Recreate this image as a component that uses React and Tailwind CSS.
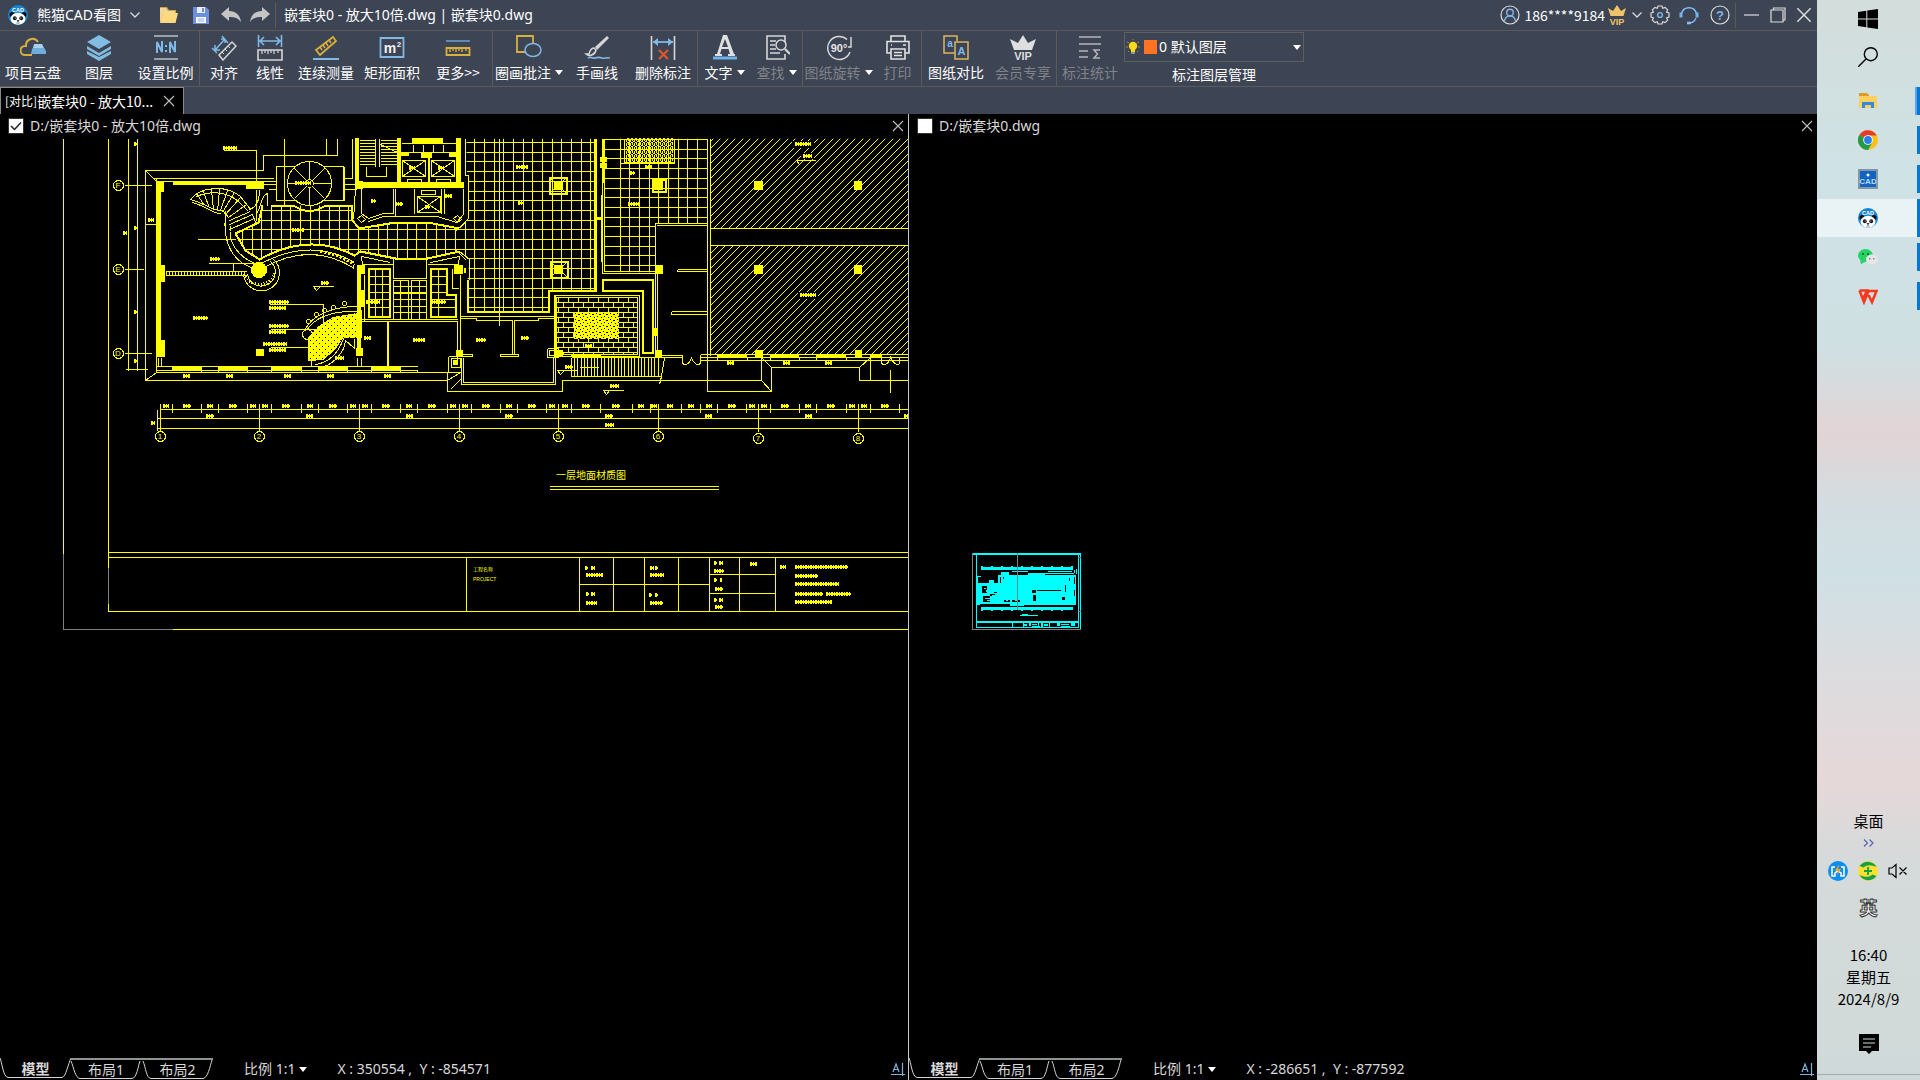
// src/App.jsx
import { useState } from "react";

const Y = "#ffff00";
const C = "#00ffff";

/* ---------- small shared pieces ---------- */

function Caret({ className = "" }) {
  return (
    <svg viewBox="0 0 8 5" className={`h-[5px] w-2 shrink-0 ${className}`}>
      <path d="M0 0h8L4 5z" fill="#fff" />
    </svg>
  );
}

function Chevron() {
  return (
    <svg viewBox="0 0 12 8" className="h-2 w-3" fill="none" stroke="#d8d8d8" strokeWidth="1.3">
      <path d="M1.500 1.500L6 6l4.500-4.500" />
    </svg>
  );
}

function Cross({ className = "h-3 w-3", color = "#c0c0c0" }) {
  return (
    <svg viewBox="0 0 12 12" className={className} fill="none" stroke={color} strokeWidth="1.100">
      <path d="M1 1l10 10M11 1L1 11" />
    </svg>
  );
}

function PandaLogo() {
  return (
    <svg viewBox="0 0 20 20" className="h-5 w-5">
      <circle cx="10" cy="10" r="10" fill="#1785cf" />
      <text x="10" y="6.800" textAnchor="middle" fontSize="5.500" fontWeight="700" fill="#fff" fontFamily="Liberation Sans, sans-serif">
        CAD
      </text>
      <circle cx="4" cy="9.500" r="2.500" fill="#111" />
      <circle cx="16" cy="9.500" r="2.500" fill="#111" />
      <ellipse cx="10" cy="13.800" rx="7.500" ry="6" fill="#fff" />
      <ellipse cx="6.800" cy="13.300" rx="1.900" ry="2" fill="#111" />
      <ellipse cx="13.200" cy="13.300" rx="1.900" ry="2" fill="#111" />
      <circle cx="7.200" cy="13" r=".6" fill="#fff" />
      <circle cx="12.800" cy="13" r=".6" fill="#fff" />
      <path d="M9 15.500h2l-1 1.200zM8.500 18h3" fill="#111" stroke="#111" strokeWidth=".6" />
    </svg>
  );
}

/* ---------- title bar ---------- */

function TitleBar() {
  return (
    <header className="flex h-[31px] shrink-0 items-center border-b border-[#5a5a58] pb-1 pt-0">
      <div className="ml-2 mt-1">
        <PandaLogo />
      </div>
      <button className="ml-[9px] mt-1 flex items-center gap-2 font-['Noto_Sans','Noto_Sans_CJK_SC',sans-serif] text-sm leading-5">
        熊猫CAD看图
        <Chevron />
      </button>
      <button className="ml-[18px] mt-1" aria-label="打开">
        <svg viewBox="0 0 20 18" className="h-[18px] w-5">
          <path d="M1 1h7l2 3h7v12H1z" fill="#c9a24a" />
          <path d="M1 16V2h6l2 3h7v2H4z" fill="#f3d795" />
          <path d="M1 17L4 7h15l-2.500 10z" fill="#ffd980" />
        </svg>
      </button>
      <button className="ml-[13px] mt-1" aria-label="保存">
        <svg viewBox="0 0 18 18" className="h-[18px] w-[18px]">
          <path d="M1 1h13l3 3v14H1z" fill="#6e90dc" />
          <path d="M5 1h8v6H5z" fill="#e8eefb" />
          <path d="M10 2h2v4h-2z" fill="#6e90dc" />
          <path d="M4 11h10v6H4z" fill="#f4f7fd" />
          <path d="M6 13h6M6 15h6" stroke="#9cb3e6" />
        </svg>
      </button>
      <button className="ml-[11px] mt-1" aria-label="撤销">
        <svg viewBox="0 0 20 16" className="h-4 w-5">
          <path d="M8 0v4c7 0 11 4 12 11-3-4-6-5-12-5v4L0 7z" fill="#c4c4c4" />
        </svg>
      </button>
      <button className="ml-[9px] mt-1" aria-label="重做">
        <svg viewBox="0 0 20 16" className="h-4 w-5">
          <path d="M12 0v4C5 4 1 8 0 15c3-4 6-5 12-5v4l8-7z" fill="#c4c4c4" />
        </svg>
      </button>
      <span className="ml-[5px] mt-1 h-[25px] w-px bg-[#5a5a58]" />
      <h1 className="ml-2 mt-1 font-['Noto_Sans','Noto_Sans_CJK_SC',sans-serif] text-sm leading-5">
        嵌套块0 - 放大10倍.dwg | 嵌套块0.dwg
      </h1>

      <div className="ml-auto mt-1 flex items-center">
        <button className="flex items-center text-sm leading-5">
          <svg viewBox="0 0 20 20" className="mr-1 h-5 w-5" fill="none">
            <circle cx="10" cy="10" r="9" stroke="#dcdcdc" strokeWidth="1.200" />
            <circle cx="10" cy="7.500" r="3.300" stroke="#7fb6e6" strokeWidth="1.400" />
            <path d="M4.500 16c.5-3 2.500-5 5.500-5s5 2 5.500 5" stroke="#7fb6e6" strokeWidth="1.400" />
          </svg>
          186****9184
          <svg viewBox="0 0 18 20" className="ml-[3px] h-5 w-[18px]">
            <path d="M0 3l5 3 4-6 4 6 5-3-2.500 8h-13z" fill="#f0c36a" />
            <text x="9" y="19.500" textAnchor="middle" fontSize="9" fontWeight="700" fill="#f0c36a" fontFamily="Liberation Sans, sans-serif">
              VIP
            </text>
          </svg>
          <span className="ml-[5px]">
            <Chevron />
          </span>
        </button>
        <button className="ml-[7px]" aria-label="设置">
          <svg viewBox="0 0 20 20" className="h-5 w-5" fill="none">
            <path
              d="M8 1h4l.7 2.300 2.400-.9 2.500 2.500-1 2.300L19 8v4l-2.400.8 1 2.300-2.500 2.500-2.400-.9L12 19H8l-.7-2.300-2.400.9-2.500-2.500 1-2.300L1 12V8l2.400-.8-1-2.300 2.500-2.500 2.400.9z"
              stroke="#dcdcdc"
              strokeWidth="1.200"
            />
            <circle cx="10" cy="10" r="2.400" stroke="#7fb6e6" strokeWidth="1.400" />
          </svg>
        </button>
        <button className="ml-[9px]" aria-label="客服">
          <svg viewBox="0 0 20 20" className="h-5 w-5" fill="none" stroke="#7fc0f7">
            <path d="M2.500 8.500a7.800 7.800 0 0115 0" strokeWidth="1.500" />
            <path d="M2 7.500v5M18 7.500v5" stroke="#6db4f2" strokeWidth="3" />
            <path d="M17 13c-1 3-3 4.500-6 5" strokeWidth="1.200" />
            <path d="M8 18h4" strokeWidth="2.600" />
          </svg>
        </button>
        <button className="ml-[11px]" aria-label="帮助">
          <svg viewBox="0 0 20 20" className="h-5 w-5">
            <circle cx="10" cy="10" r="9" fill="none" stroke="#dcdcdc" strokeWidth="1.200" />
            <text x="10" y="14.500" textAnchor="middle" fontSize="13" fontWeight="700" fill="#7fb6e6" fontFamily="Liberation Sans, sans-serif">
              ?
            </text>
          </svg>
        </button>
        <span className="ml-[5px] h-[25px] w-px bg-[#5a5a58]" />
        <button className="ml-2" aria-label="最小化">
          <svg viewBox="0 0 16 16" className="h-4 w-4">
            <path d="M0 8h15" stroke="#dcdcdc" strokeWidth="1.200" />
          </svg>
        </button>
        <button className="ml-[10px]" aria-label="还原">
          <svg viewBox="0 0 16 16" className="h-4 w-4" fill="none" stroke="#dcdcdc" strokeWidth="1.200">
            <path d="M1 3h12v12H1zM3.500 3V1H15v12h-2" />
          </svg>
        </button>
        <button className="ml-[10px] mr-[5px]" aria-label="关闭">
          <Cross className="h-4 w-4" color="#dcdcdc" />
        </button>
      </div>
    </header>
  );
}

/* ---------- toolbar ---------- */

const BLUE = "#7fb9e6";
const GOLD = "#d9b03c";
const GREY = "#d6d6d6";

const icons = {
  cloud: (
    <>
      <path d="M12 20H5a4 4 0 010-9h1a6.500 6.500 0 0112-4" fill="none" stroke={GOLD} strokeWidth="2" />
      <path d="M14 9h8l4 8H12z" fill="#a5d0ee" />
      <path d="M12 14l1-1h11l2 3v3H11z" fill="#6eaedd" />
    </>
  ),
  layers: (
    <g fill="#83bce3">
      <path d="M13 0l12 7-12 7L1 7z" />
      <path d="M1 11l12 7 12-7v3l-12 7-12-7z" />
      <path d="M1 16l12 6 12-6v3l-12 7-12-7z" />
    </g>
  ),
  scale: (
    <>
      <path d="M1 1h24M1 24h24" stroke="#bcc0c6" strokeWidth="1.600" />
      <path d="M4 18V7l5 10V6M17 18V7l5 10V6M13 10v2M13 15v2" fill="none" stroke={BLUE} strokeWidth="2" />
    </>
  ),
  align: (
    <>
      <path d="M1 13l5 5M11 1l6 7M4 15L14 4M4 15v-5M4 15h5M14 4V8M14 4H10" fill="none" stroke={BLUE} strokeWidth="1.500" />
      <path d="M8 20L21 7l4 4-13 14z" fill="none" stroke={GREY} strokeWidth="1.500" />
      <path d="M11 17l2 2M14 14l2 2M17 11l2 2" stroke={GREY} />
    </>
  ),
  linear: (
    <>
      <path d="M1.500 0v12M24.500 0v12M2 6h22M7 2L3 6l4 4M19 2l4 4-4 4" fill="none" stroke={BLUE} strokeWidth="1.600" />
      <path d="M1 15h24v10H1z" fill="none" stroke={GREY} strokeWidth="1.600" />
      <path d="M5 15v4M8 15v3M11 15v4M14 15v3M17 15v4M21 15v3" stroke={GREY} strokeWidth="1.200" />
    </>
  ),
  ruler: (
    <>
      <path d="M3 15L20 2l3 4L7 20z" fill="none" stroke={GOLD} strokeWidth="1.800" />
      <path d="M7 12l2 3M10 10l2 3M13 8l2 3M16 5l2 3" stroke={GOLD} strokeWidth="1.500" />
      <path d="M0 24h26" stroke={BLUE} strokeWidth="2" />
    </>
  ),
  area: (
    <>
      <path d="M1.500 3h23v19h-23z" fill="none" stroke={BLUE} strokeWidth="1.800" />
      <text x="11" y="18" textAnchor="middle" fontSize="14" fontWeight="700" fill="#f2f2f2" fontFamily="Liberation Sans, sans-serif">
        m
      </text>
      <text x="20" y="12" textAnchor="middle" fontSize="8" fontWeight="700" fill="#f2f2f2" fontFamily="Liberation Sans, sans-serif">
        2
      </text>
    </>
  ),
  more: (
    <>
      <path d="M1 6h24" stroke="#6aa3cc" strokeWidth="1.500" />
      <path d="M1.500 13h23v7h-23z" fill="none" stroke={GOLD} strokeWidth="1.800" />
      <path d="M5 13v4M8 13v3M11 13v4M14 13v3M17 13v4M21 13v3" stroke={GOLD} strokeWidth="1.400" />
    </>
  ),
  shapes: (
    <>
      <path d="M1 1h16v16H1z" fill="none" stroke={GOLD} strokeWidth="1.800" />
      <ellipse cx="17" cy="15" rx="8" ry="6.500" fill="#3d4453" stroke={BLUE} strokeWidth="1.500" />
    </>
  ),
  brush: (
    <>
      <path d="M23 1L11 12l2 3L25 3z" fill={GREY} />
      <path d="M10 13c-4 0-4 4-5 6H2c3 3 9 1 10-4z" fill="none" stroke={GREY} strokeWidth="1.500" />
      <path d="M4 23c3-2 4 1 7 0s4-1 7 0 4-1 8 0" fill="none" stroke={BLUE} strokeWidth="1.600" />
    </>
  ),
  remove: (
    <>
      <path d="M1.500 1v24M24.500 1v24" stroke={GREY} strokeWidth="1.600" />
      <path d="M3 7h20" stroke={BLUE} strokeWidth="1.800" />
      <path d="M8 3L3 7l5 4zM18 3l5 4-5 4z" fill={BLUE} />
      <path d="M9 15l9 9M18 15l-9 9" stroke="#e0562b" strokeWidth="2.200" />
    </>
  ),
  text: (
    <>
      <path d="M11 0h4l7 19h1v2h-7v-2h2l-1.500-5h-7L8 19h2v2H3v-2h2zm2 4l-3 8h6z" fill="#e0e0e0" />
      <path d="M1 23h24" stroke="#6fb2e6" strokeWidth="3" />
    </>
  ),
  find: (
    <>
      <path d="M21 7V1H3v23h18v-5" fill="none" stroke={GREY} strokeWidth="1.600" />
      <path d="M6 6h6M6 10h5M6 14h6M6 18h10" stroke={GREY} strokeWidth="1.300" />
      <circle cx="17" cy="10" r="5" fill="none" stroke={GREY} strokeWidth="1.500" />
      <path d="M21 14l5 5" stroke={GREY} strokeWidth="2.200" />
    </>
  ),
  rotate: (
    <>
      <path d="M21 4.500A11.500 11.500 0 1024 17" fill="none" stroke={GREY} strokeWidth="1.500" />
      <path d="M25 2v10h-3" fill="none" stroke={GREY} strokeWidth="1.500" />
      <text x="13" y="17" textAnchor="middle" fontSize="11" fontWeight="700" fill="#e6e6e6" fontFamily="Liberation Sans, sans-serif">
        90°
      </text>
    </>
  ),
  print: (
    <g fill="none" stroke="#e2e2e2" strokeWidth="1.600">
      <path d="M6 6V1h14v5M6 18H2V6.500h22V18h-4" />
      <path d="M6 14h14v10H6zM9 17.500h8M9 20.500h8M6 10h1M18 10h3" />
    </g>
  ),
  compare: (
    <g fill="none" stroke="#dcb463" strokeWidth="1.500">
      <path d="M12 18H1V1h13v5M12 7h13v17H12z" />
      <text x="7" y="12" textAnchor="middle" fontSize="10" fontWeight="700" fill={BLUE} stroke="none" fontFamily="Liberation Sans, sans-serif">
        a
      </text>
      <text x="18.500" y="20" textAnchor="middle" fontSize="11" fontWeight="700" fill={BLUE} stroke="none" fontFamily="Liberation Sans, sans-serif">
        A
      </text>
    </g>
  ),
  vip: (
    <g fill="#dedede">
      <path d="M0 4l8 4 5-8 5 8 8-4-4 11H4z" />
      <text x="13" y="25" textAnchor="middle" fontSize="11" fontWeight="700" fontFamily="Liberation Sans, sans-serif">
        VIP
      </text>
    </g>
  ),
  stats: (
    <g fill="none" stroke="#b4b6ba" strokeWidth="1.600">
      <path d="M2 2h22M2 9h22M2 16h9M2 22h9" />
      <path d="M23 15h-6l3.500 4-3.500 4h6" strokeWidth="1.500" />
    </g>
  ),
};

const groups = [
  [
    { icon: "cloud", label: "项目云盘", w: "w-[66px]" },
    { icon: "layers", label: "图层", w: "w-[66px]" },
    { icon: "scale", label: "设置比例", w: "w-[67px]" },
  ],
  [
    { icon: "align", label: "对齐", w: "w-12" },
    { icon: "linear", label: "线性", w: "w-11" },
    { icon: "ruler", label: "连续测量", w: "w-[68px]" },
    { icon: "area", label: "矩形面积", w: "w-16" },
    { icon: "more", label: "更多>>", w: "w-[68px]" },
  ],
  [
    { icon: "shapes", label: "圈画批注", w: "w-[72px]", menu: true },
    { icon: "brush", label: "手画线", w: "w-16" },
    { icon: "remove", label: "删除标注", w: "w-[68px]" },
  ],
  [
    { icon: "text", label: "文字", w: "w-[53px]", menu: true },
    { icon: "find", label: "查找", w: "w-[51px]", menu: true, off: true },
  ],
  [
    { icon: "rotate", label: "图纸旋转", w: "w-[71px]", menu: true, off: true },
    { icon: "print", label: "打印", w: "w-[47px]", off: true },
  ],
  [
    { icon: "compare", label: "图纸对比", w: "w-[68px]" },
    { icon: "vip", label: "会员专享", w: "w-[66px]", off: true },
  ],
  [{ icon: "stats", label: "标注统计", w: "w-[66px]", off: true }],
];

function ToolButton({ icon, label, w, menu, off }) {
  return (
    <button className={`flex flex-col items-center pt-1 ${w}`} disabled={off}>
      <svg viewBox="0 0 26 26" className="h-[26px] w-[26px]">
        {icons[icon]}
      </svg>
      <span className={`mt-px flex items-center gap-1 whitespace-nowrap text-sm leading-5 ${off ? "text-[#80838a]" : ""}`}>
        {label}
        {menu && <Caret />}
      </span>
    </button>
  );
}

function Toolbar() {
  return (
    <div className="flex h-14 shrink-0 border-b border-[#5a5a58]">
      {groups.map((g, i) => (
        <div key={i} className={i < 6 ? "flex border-r border-[#5a5a58]" : "flex"}>
          {g.map((t) => (
            <ToolButton key={t.label} {...t} />
          ))}
        </div>
      ))}
      <div className="ml-px flex w-[180px] flex-col items-center pt-px">
        <div className="relative w-full">
          <select
            id="layer"
            className="h-[30px] w-full appearance-none border border-[#5e5f5f] bg-transparent pl-[34px] font-['Noto_Sans','Noto_Sans_CJK_SC',sans-serif] text-sm text-white"
          >
            <option>0 默认图层</option>
          </select>
          <svg viewBox="0 0 14 16" className="pointer-events-none absolute left-[2px] top-[7px] h-4 w-[14px]">
            <path d="M1 3l2 1M13 3l-2 1M0 8h2M14 8h-2M2 13l1-1M12 13l-1-1M7 0v1" stroke="#ab8a28" />
            <circle cx="7" cy="7" r="4.200" fill="#ffd91a" />
            <path d="M5 10h4v3H5z" fill="#ffd91a" />
            <path d="M5 14h4" stroke="#ddd" />
          </svg>
          <span className="pointer-events-none absolute left-5 top-2 h-[14px] w-[13px] bg-[#ff7322]" />
          <Caret className="pointer-events-none absolute right-[3px] top-[13px]" />
        </div>
        <label htmlFor="layer" className="mt-[2px] text-sm leading-5">
          标注图层管理
        </label>
      </div>
    </div>
  );
}

/* ---------- floor plan ---------- */

const range = (n) => Array.from({ length: n }, (_, i) => i);

const hallClip =
  "M235 233L258 222L262 205H351V219L359 228L395 222H427L459 228L468 218V175L466 170V138H595V290H548V311H467V279L469 259L459 251L427 258H395L360 251L354 255Q309 231 259 259L245 250Z";

// tiles share one module of a little under ten pixels
const tiles = (x0, y0, cols, rows) =>
  range(cols).map((i) => `M${Math.round(x0 + i * 9.68)} 130V330`).join("") +
  range(rows).map((j) => `M200 ${Math.round(y0 + j * 9.7)}H720`).join("");

const hatch = (top, bottom) =>
  range(44)
    .map((i) => {
      const x = 600 + i * 7.5;
      return `M${Math.round(x)} ${bottom}L${Math.round(x) + bottom - top} ${top}`;
    })
    .join("");

const bricks = range(12)
  .map((r) => {
    const y = 297 + r * 5;
    return (
      `M556 ${y}H637` +
      range(8).map((c) => `M${558 + c * 10 + (r % 2) * 5} ${y}v5`).join("")
    );
  })
  .join("");

const axisX = [160, 259, 359, 459, 558, 658, 758, 858];
const tickX = [
  160, 172, 201, 218, 247, 259, 271, 301, 318, 347, 359, 371, 400, 417, 447, 459, 471, 500, 517, 546, 558, 571, 600, 632,
  650, 658, 681, 700, 717, 746, 758, 770, 799, 816, 846, 858, 870, 899,
];

// illegibly small lettering shows up as short broken bars: x, y, width
const marks = [
  [223, 148, 14], [148, 220, 6], [295, 183, 16], [210, 259, 10], [193, 318, 15], [321, 283, 8], [269, 302, 20],
  [269, 308, 17], [269, 326, 20], [269, 332, 17], [263, 344, 24], [269, 350, 17], [292, 230, 12], [371, 201, 5],
  [395, 204, 8], [445, 196, 7], [409, 168, 6], [438, 168, 6], [425, 207, 5], [366, 302, 14], [431, 302, 15],
  [364, 338, 7], [413, 340, 12], [476, 340, 10], [521, 338, 8], [335, 358, 9], [516, 167, 12], [518, 203, 6],
  [628, 204, 12], [630, 173, 5], [645, 167, 7], [795, 144, 16], [803, 156, 9], [800, 295, 16], [585, 346, 7],
  [565, 367, 8], [610, 386, 9], [183, 376, 7], [226, 376, 7], [284, 376, 7], [327, 376, 7], [384, 376, 7],
  [727, 363, 7], [783, 363, 7], [825, 363, 7], [206, 416, 8], [306, 416, 7], [406, 416, 7], [505, 416, 8],
  [605, 416, 8], [705, 416, 7], [805, 416, 7], [904, 416, 4], [605, 425, 9], [151, 423, 4], [134, 144, 3],
  [134, 228, 3], [134, 312, 3], [134, 361, 3], [123, 233, 4],
  [585, 568, 3], [591, 568, 4], [586, 575, 17], [586, 594, 3], [591, 594, 4], [586, 603, 11],
  [650, 568, 4], [655, 568, 3], [650, 575, 14], [649, 595, 3], [655, 595, 3], [650, 603, 13],
  [714, 563, 3], [719, 563, 4], [714, 571, 10], [714, 580, 3], [720, 580, 2], [715, 589, 8],
  [714, 600, 3], [719, 600, 4], [715, 607, 8], [750, 564, 7], [780, 567, 6],
  [795, 567, 53], [795, 576, 23], [795, 584, 44], [795, 594, 28], [826, 594, 25], [795, 602, 37],
];

const markPath = marks.map(([x, y, w]) => `M${x} ${y}h${w}`).join("");
const dimPath = tickX
  .slice(0, -1)
  .map((x, i) => {
    const gap = tickX[i + 1] - x;
    const w = gap > 25 ? 8 : 6;
    return `M${Math.round(x + (gap - w) / 2)} 406h${w}`;
  })
  .join("");

function FloorPlan() {
  return (
    <svg className="block h-full w-full" shapeRendering="crispEdges" fontFamily="'Liberation Sans', 'Noto Sans CJK SC', sans-serif">
      <defs>
        <clipPath id="hall">
          <path d={hallClip} />
        </clipPath>
        <clipPath id="lobby">
          <path d="M604 138H707V223H655V272H604Z" />
        </clipPath>
        <clipPath id="wing">
          <path d="M710 138H908V228H710ZM710 245H908V355H710Z" />
        </clipPath>
        <clipPath id="brick">
          <path d="M556 297H637V354H556Z" />
        </clipPath>
        <pattern id="speck" width="7" height="6" patternUnits="userSpaceOnUse">
          <path d="M0 0h7v6H0z" fill={Y} />
          <path d="M1 1h1v1H1zM4 2h2v1H4zM2 4h1v1H2zM6 5h1v1H6z" fill="#000" />
        </pattern>
        <pattern id="grain" width="4" height="4" patternUnits="userSpaceOnUse">
          <path d="M0 0h1v1H0zM2 0h1v1H2zM1 1h2v1H1zM3 2h1v1H3zM0 2h1v1H0zM2 3h1v1H2zM0 3h1v1H0z" fill={Y} />
        </pattern>
        <pattern id="dots" width="6" height="6" patternUnits="userSpaceOnUse">
          <path d="M0 0h6v6H0z" fill={Y} />
          <path d="M1 1h1v1H1zM4 4h1v1H4z" fill="#000" />
        </pattern>
      </defs>

      {/* solid areas */}
      <g transform="translate(0 -138)" fill={Y}>
        <path d="M156 181h5v176h-5zM156 265h9v17h-9zM156 340h9v17h-9zM161 181h3v11h-3z" />
        <path d="M173 181h74v4h-74zM246 181h18v8h-18z" />
        <path d="M172 366h29v4h-29zM218 366h29v4h-29zM271 366h30v4h-30zM318 366h29v4h-29zM371 366h30v4h-30z" />
        <path d="M355 138h4v50h-4zM397 138h4v50h-4zM456 138h5v50h-5zM355 182h109v6H355zM355 181h8v8h-8z" />
        <path d="M401 152h8v4h-8zM421 152h11v6h-11zM449 152h8v5h-8zM428 158h2v26h-2zM412 138h31v6h-31z" />
        <path d="M357 265h8v9h-8zM357 274h4v75h-4zM356 348h7v8h-7zM357 310h5v28h-5zM361 290h4v17h-4z" />
        <path d="M454 265h9v9h-9zM456 350h7v7h-7zM453 360h5v5h-5zM256 349h8v7h-8zM464 268h2v5h-2z" />
        <path d="M554 181h9v9h-9zM554 265h9v9h-9zM555 350h8v7h-8zM654 180h9v10h-9zM655 265h8v9h-8zM655 350h7v7h-7z" />
        <path d="M754 181h9v9h-9zM854 181h8v9h-8zM754 265h9v9h-9zM854 265h8v9h-8zM755 350h8v7h-8zM855 350h7v7h-7z" />
        <path d="M600 157h7v5h-7zM600 163h7v5h-7zM595 217h6v3h-6zM653 328h4v8h-4z" />
        <path d="M717 354h30v3h-30zM770 354h29v3h-29zM816 354h30v3h-30zM870 354h12v3h-12zM571 354h30v3h-30z" />
        <circle cx="259" cy="270" r="8" />
        <path d="M357 313V338H343L335 350L323 360L308 361V338L317 327L333 317Z" fill="url(#dots)" />
        <path d="M626 138h47v24h-47z" fill="url(#grain)" />
      </g>

      <g transform="translate(0.5 -137.500)" fill="none" stroke={Y}>
        {/* sheet frame and title block */}
        <path d="M63 138V553M172 629H908M108 138V567M108 603V611M108 552H908M108 557H908M108 611H908" />
        <path d="M63 553V629H172M108 567V603" stroke="#808080" />
        <path d="M466 557V611M579 557V611M613 557V611M644 557V611M678 557V611M709 557V611M739 557V611M775 557V611" />
        <path d="M579 584H709M709 574H775M709 593H775M549 486H718M549 489H718" />

        {/* axes and dimensions */}
        <path d="M160 409H908M157 418H908M157 428H908M157 409V430M128 138V370M137 138V370M125 369H147" />
        <path d={tickX.map((x) => `M${x} 403v9`).join("")} />
        <path d={axisX.map((x) => `M${x} 403V431`).join("")} />
        <path d="M124 185H151M124 269H143M124 353H151M144 224H156" />
        {axisX.map((x, i) => (
          <circle key={x} cx={x} cy={i > 5 ? 438 : 436} r="5" />
        ))}
        {[185, 269, 353].map((y) => (
          <circle key={y} cx="118" cy={y} r="5" />
        ))}

        {/* outer walls */}
        <path d="M145 170H263V155H337V138M326 138V155M145 170V380H447V391H562V380H761V357M352 138V178H343M284 138V204" />
        <path d="M145 170L156 181M145 380L156 372M153 178H273M161 181H173M263 181H275M263 184H275M156 178V372M161 357V366M158 357V366" />
        <path d="M156 366H417M156 370H417V372M156 372H447L459 372M447 380V372M447 380L460 372M450 389L461 378" />
        <path d="M201 366v6M218 366v6M247 366v6M271 366v6M301 366v6M318 366v6M347 366v6M371 366v6M400 366v6" />

        {/* skylight */}
        <circle cx="309" cy="183" r="22" />
        <circle cx="309" cy="183" r="4" />
        <path d="M309 161V179M309 187V205M287 183H305M313 183H331M294 168L306 180M312 186L324 198M324 168L312 180M306 186L294 198" />
        <path d="M294 166H276V200H296M322 166H343V200H322" />
        <path d="M343 166V200" strokeWidth="2" />
        <path d="M344 184h12M344 189h12M268 184h7M268 189h7" />

        {/* winding stair */}
        <path d="M190 199C200 186 225 184 240 196L250 209M190 199C205 203 215 212 222 210L229 218M196 193L204 205M203 191L209 208M211 189L213 210M219 189L217 211M227 190L220 210M234 192L222 212M240 197L225 214M246 204L228 217" />
        <path d="M196 196C210 190 226 191 238 201L248 211M192 202C204 205 212 213 220 213" />
        <path d="M225 210V228M229 220L250 211M229 224L252 214M229 229L254 218M249 209C256 207 259 200 259 189M256 213C262 205 260 195 267 193V205M252 214L256 224" />
        <path d="M225 215C222 242 232 262 254 268M230 226C227 242 238 257 257 264" />
        <path d="M256 189V220M223 150H256V182M197 239H235M208 263H255M233 263V271M165 271H246M165 275H246" />
        <path d="M165 273H246" strokeDasharray="1 2" strokeWidth="3" />
        <path d="M243 274A18 18 0 1 0 273 259M247 274A14 14 0 1 0 270 261" />
        <path d="M245 276A16 16 0 0 0 274 273" strokeDasharray="1 2" strokeWidth="3" />
        <path d="M259 264Q310 236 354 262M262 268Q310 240 354 268" />
        <path d="M320 251Q340 254 354 265" strokeDasharray="2 2" strokeWidth="3" />

        {/* tiled hall */}
        <g clipPath="url(#hall)">
          <path d={tiles(242, 142, 40, 20)} />
          <path d="M499 138V330M594 138V290" />
        </g>
        <path d="M235 233L258 222L262 205M270 205H293Q309 216 325 205H351V219L359 228L395 222H427L459 228M235 233L245 250L259 259Q309 231 354 255L360 251L395 258H427L459 251" strokeWidth="2" />
        <path d="M459 228L468 218V175H465V138M459 251L469 259V279" />
        <path d="M467 279V311H548V290H595V138" strokeWidth="2" />
        <path d="M456 230L466 221M456 250L466 260M355 188L353 219M499 311V325" />

        {/* stair and lift core */}
        <path d={range(9).map((i) => `M359 ${140 + i * 3}H375M380 ${140 + i * 3}H397`).join("")} />
        <path d="M375 138V166M379 138V166M366 166V176H386V166M380 144L397 152M401 143H456M413 144V152M423 144V152M433 144V152M443 144V152M401 152H460" />
        <path d="M402 160h23v16h-23zM402 160l23 16M425 160l-23 16M431 160h23v16h-23zM431 160l23 16M454 160l-23 16" />
        <path d="M407 179h14v3h-14zM436 179h14v3h-14zM417 196h23v16h-23zM417 196l23 16M440 196l-23 16M421 190h14v4h-14z" />
        <path d="M361 188V213L368 218L383 213H393V188M395 188V215M414 188V213M441 188V213M444 188V213M463 188V214L456 222L437 216H383L368 221" />
        <path d="M357 218l4-3 4 4-4 3zM453 218l4-3 4 4-4 3z" />
        <path d="M361 256L362 264H393M361 256L390 262M427 264H458L459 256L430 262M393 256V278H426V256M364 274V320" />

        {/* wash rooms */}
        <path d="M368 268H389V316H368ZM430 268V316H455V294H446V268Z" strokeWidth="2" />
        <path d="M375 268V316M382 268V316M368 276h21M368 284h21M368 292h21M368 299h21M368 307h21" />
        <path d="M438 268V316M430 276h16M430 284h16M430 292h16M430 299h25M430 307h25M452 268V288H458" />
        <path d="M393 280H408V319H393ZM411 280H426V319H411ZM400 280V319M419 280V319M393 286h33M393 299h33M393 306h33M393 312h33" />
        <path d="M393 292h33" strokeWidth="2" />
        <path d="M361 319H457M361 321H457V362M460 274V350M387 320V367M364 310V320M357 357V366M361 357V366M448 356H461M448 356V372H461M451 358H460V367H451Z" />
        <path d="M387 320V367" strokeWidth="2" />

        {/* bar counter */}
        <path d="M304 330C312 314 332 306 357 306M306 330C316 315 334 310 357 311M311 359V366H324C334 362 344 352 345 340M315 364C330 362 338 352 343 338M345 340L354 348V338" />
        <circle cx="307" cy="334" r="5" />
        {[[308, 321], [316, 314], [324, 310], [333, 307], [344, 303]].map(([x, y]) => (
          <circle key={x} cx={x} cy={y} r="2" />
        ))}
        <path d="M269 304H323V322M270 329H320M270 347H308M313 286H333M313 286L316 290L320 286" />

        {/* south rooms */}
        <path d="M460 316H555M460 318H476V320H512V354M514 354V320H538V318H555M555 295V355M460 354H472V356H460M500 354H518V356H500ZM461 357V384H555V357M463 357V382H553V357" />
        <path d="M547 348H558M547 348V357H558M549 350H556V355H549Z" />
        <path d="M554 295H639V356H554ZM556 297H637V354H556Z" />
        <path d="M637 297V354M571 376V357M571 376H661L664 357M661 376L659 384M571 357H665" />
        <g clipPath="url(#brick)">
          <path d={bricks} />
        </g>
        <path d="M579 367H598M556 370H576M557 370L560 374L564 370M602 390H623M603 390L606 394L609 390" />
        <path d={range(26).map((i) => `M${Math.round(574 + i * 3.35)} 357V376`).join("")} />
        <path d="M602 279H652V352H642V290H602Z" strokeWidth="2" />

        {/* lobby */}
        <g clipPath="url(#lobby)">
          <path d={tiles(619.500, 139, 10, 14)} />
        </g>
        <path d="M624 138V162H674V138M620 138V163H674V138M604 181V271H655M602 138V273H655M601 194V261" />
        <path d="M603 138V182" strokeWidth="2" />
        <path d="M707 223H655V354M707 225H656M657 273V354M707 138V391H771M710 138V355M677 269H707M677 271H707M677 269V271M671 311H707M671 314H707M671 311V314" />
        <path d="M549 177H566V193H549ZM550 261H567V277H550ZM652 179H665V191H652Z" strokeWidth="2" />
        <path d="M549 177l17 16M566 177l-17 16M550 261l17 16M567 261l-17 16" />

        {/* east wing */}
        <g clipPath="url(#wing)">
          <path d={hatch(138, 228)} />
          <path d={hatch(245, 355)} />
        </g>
        <path d="M710 228H908M710 245H908M657 355H682V357H660M700 354H908M700 357H908M700 360H908M700 354V360M682 355V363C687 366 690 361 691 357C692 361 696 366 700 363V357M881 355V363C886 366 889 361 890 357C892 361 896 366 899 363V357" />
        <path d="M761 357L771 367V391L761 380M771 367H859V380H908M859 367L870 357V380M890 369V392M717 357v3M747 357v3M770 357v3M799 357v3M816 357v3M846 357v3M795 160H815M796 160L799 164L803 160" />
      </g>

      <g transform="translate(0 -138)">
        <path d="M574 312h45v27h-45z" fill="url(#speck)" />
        <path d="M792 141h22v7h-22zM801 153h13v6h-13zM798 292h20v7h-20z" fill="#000" />
        <g fill="none" stroke={Y}>
          <path d={markPath} strokeWidth="2" />
          <path d={dimPath} strokeWidth="2" />
          <path d={markPath} strokeWidth="4" strokeDasharray="2 1 1 1" />
          <path d={dimPath} strokeWidth="4" strokeDasharray="2 1 1 1" />
        </g>
        <g fill={Y} fontSize="8" textAnchor="middle">
          {axisX.map((x, i) => (
            <text key={x} x={x} y={i > 5 ? 441 : 439}>
              {i + 1}
            </text>
          ))}
          <text x="118" y="188">F</text>
          <text x="118" y="272">E</text>
          <text x="118" y="356">D</text>
        </g>
        <text x="556" y="479" fontSize="10" fill={Y}>
          一层地面材质图
        </text>
        <text x="473" y="571" fontSize="5" fill={Y}>
          工程名称
        </text>
        <text x="473" y="581" fontSize="5" fill={Y}>
          PROJECT
        </text>
      </g>
    </svg>
  );
}

// the same sheet at a tenth of the scale
function MiniPlan() {
  return (
    <svg className="block h-full w-full" shapeRendering="crispEdges">
      <g transform="translate(-909 -138)" fill={C}>
        <path d="M972 553h1v77h-1zM972 629h109v1H972z" fill="#808080" />
        <path d="M973 553h108v2H973zM1080 553h1v76h-1zM976 555h1v73h-1zM1078 555h1v73h-1zM976 627h103v1H976zM976 621h103v2H976z" />
        <path d="M981 567h92v3h-92zM981 607h92v3h-92z" />
        <path d="M981 566h2v1h-2zM991 566h2v1h-2zM1001 566h2v1h-2zM1011 566h2v1h-2zM1021 566h2v1h-2zM1031 566h2v1h-2zM1041 566h2v1h-2zM1051 566h2v1h-2zM1061 566h2v1h-2zM1071 566h2v1h-2z" />
        <path d="M981 610h2v1h-2zM991 610h2v1h-2zM1001 610h2v1h-2zM1011 610h2v1h-2zM1021 610h2v1h-2zM1031 610h2v1h-2zM1041 610h2v1h-2zM1051 610h2v1h-2zM1061 610h2v1h-2z" />
        <path d="M980 583H989V580H994V583H998V575H1001V572H1009V575H1028V573H1045V575H1076V605H1052V605H1024V606H1010V604H980V605H977V576H981V577H978V583Z" />
        <path d="M1048 571h24v1h-24zM1044 573h30v1h-30zM1012 571h16v1h-16zM1076 569h1v5h-1zM1074 570h1v3h-1z" />
        <path d="M982 586h5v7h-5zM990 594h5v2h-5zM983 596h7v6h-7zM994 592h3v1h-3zM1004 600h6v2h-6zM1012 600h8v2h-8zM1032 590h4v3h-4zM1033 595h3v6h-3zM1037 590h24v1h-24zM1065 585h1v7h-1zM1062 597h3v3h-3zM1000 577h1v6h-1zM1003 577h1v2h-1zM1069 578h1v3h-1zM1074 577h1v7h-1zM1074 590h1v6h-1z" fill="#000" />
        <path d="M984 588h2v1h-2zM986 590h1v2h-1zM985 598h5v1h-5zM987 600h4v1h-4zM1006 600h2v1h-2zM1015 600h2v1h-2zM992 595h3v1h-3z" />
        <path d="M1022 614h6v1h-6zM1020 615h18v1h-18z" />
        <path d="M1012 623h1v4h-1zM1023 623h1v4h-1zM1024 624h3v2h-3zM1029 623h2v3h-2zM1032 624h5v1h-5zM1032 626h8v1h-8zM1038 623h1v4h-1zM1041 623h2v4h-2zM1044 624h4v2h-4zM1049 623h1v4h-1zM1057 623h3v3h-3zM1061 624h8v1h-8zM1061 626h9v1h-9zM1071 623h4v3h-4z" />
        <path d="M1017 553h1v57h-1z" fill="#5c8f92" />
        <path d="M1078 557h3v1h-3zM1078 611h3v1h-3z" fill="#808080" />
      </g>
    </svg>
  );
}

/* ---------- drawing panes ---------- */

function SheetTabs() {
  return (
    <div className="relative flex h-[22px] w-[214px] text-sm leading-5">
      <svg viewBox="0 0 214 22" className="absolute inset-0 h-[22px] w-[214px]" fill="none" stroke="#d4d4d4">
        <path d="M0 0C2 4 3 19 8 19.500H62C66 19 68 6 71 0M71 3C74 10 75 20 80 20.500H132C137 20 138 8 140 3M143 3C146 10 146 20 151 20.500H203C208 20 210 8 212 2" />
        <path d="M71 1h142" stroke="#8c948f" strokeWidth="2" />
      </svg>
      <button className="relative w-[71px] font-bold">模型</button>
      <button className="relative w-[70px] pt-[2px]">布局1</button>
      <button className="relative w-[73px] pt-[2px]">布局2</button>
    </div>
  );
}

function Pane({ id, file, checked, coords, children, className = "" }) {
  const [on, setOn] = useState(checked);
  return (
    <section
      className={`flex min-w-0 flex-1 flex-col bg-black font-['Noto_Sans','Noto_Sans_CJK_SC',sans-serif] text-[#d8d8d8] ${className}`}
    >
      <div className="flex h-6 shrink-0 items-center pr-1">
        <span className="relative ml-2 h-4 w-4">
          <input
            id={id}
            type="checkbox"
            checked={on}
            onChange={(e) => setOn(e.target.checked)}
            className="block h-4 w-4 appearance-none border border-[#333] bg-white"
          />
          {on && (
            <svg viewBox="0 0 16 16" className="pointer-events-none absolute inset-0 h-4 w-4" fill="none" stroke="#222" strokeWidth="1.500">
              <path d="M3 8l3.500 3.500L13 4.500" />
            </svg>
          )}
        </span>
        <label htmlFor={id} className="ml-[6px] text-sm leading-5">
          {file}
        </label>
        <button className="ml-auto" aria-label="关闭图纸">
          <Cross />
        </button>
      </div>
      <div className="min-h-0 flex-1 overflow-hidden">{children}</div>
      <footer className="flex h-[22px] shrink-0 items-start text-sm leading-5">
        <SheetTabs />
        <button className="ml-[30px] flex items-center gap-1 pt-px">
          比例 1:1
          <Caret />
        </button>
        <span className="ml-[30px] whitespace-pre pt-px">{coords}</span>
        <button className="ml-auto mr-[3px]" aria-label="文字识别">
          <svg viewBox="0 0 14 14" className="mt-1 h-[14px] w-[14px]" fill="none" stroke="#7db3dc" strokeWidth="1.200">
            <path d="M2 10L5 2l3 8M3 7.500h4M0 12.500h14M11.500 1v13" />
          </svg>
        </button>
      </footer>
    </section>
  );
}

/* ---------- system task bar ---------- */

const apps = [
  {
    name: "文件资源管理器",
    bar: "h-7 w-[5px] border-l-2 border-[#5aa3e6]",
    art: (
      <>
        <path d="M1 2h8l2 2v4H1z" fill="#e09b25" />
        <path d="M1 5h18v12H1z" fill="#ffd05c" />
        <path d="M4 17v-6h12v6h-3v-3H7v3z" fill="#2f8be0" />
      </>
    ),
  },
  {
    name: "Chrome",
    bar: "h-7 w-[3px]",
    art: (
      <>
        <circle cx="10" cy="10" r="10" fill="#fbc116" />
        <path d="M10 10L1.300 5A10 10 0 0118.700 5.500H10z" fill="#e33b2e" />
        <path d="M10 10L1.300 5A10 10 0 0010 20l4.300-7.500z" fill="#229a4a" />
        <circle cx="10" cy="10" r="4.800" fill="#fff" />
        <circle cx="10" cy="10" r="3.900" fill="#2b7de9" />
      </>
    ),
  },
  {
    name: "CAD",
    bar: "h-7 w-[3px]",
    art: (
      <>
        <path d="M0 0h20v20H0z" fill="#8795a3" />
        <path d="M2 2h16v16H2z" fill="#1065c4" />
        <text x="10" y="14.500" textAnchor="middle" fontSize="8" fontWeight="700" fill="#bcdcf5" fontFamily="Liberation Sans, sans-serif">
          CAD
        </text>
        <circle cx="10" cy="6" r="1.500" fill="#fff" />
      </>
    ),
  },
  { name: "熊猫CAD看图", bar: "h-[38px] w-[3px]", active: true },
  {
    name: "微信",
    bar: "h-7 w-[3px]",
    art: (
      <>
        <ellipse cx="7.500" cy="8.500" rx="7.500" ry="6.500" fill="#25d366" />
        <path d="M2 13l1 4 4-2z" fill="#25d366" />
        <ellipse cx="14" cy="12.500" rx="6" ry="5" fill="#e6e6e6" />
        <path d="M4 6h2v2H4zM9 6h2v2H9z" fill="#17753a" />
        <path d="M11 11h1.500v1.500H11zM15 11h1.500v1.500H15z" fill="#888" />
      </>
    ),
  },
  {
    name: "WPS",
    bar: "h-7 w-[3px]",
    art: (
      <path d="M1.500 4.500H9L5.500 12M1.500 4.500L6 16l4.500-11H18.500L14 16l-3.500-7" fill="none" stroke="#f5391d" strokeWidth="2.600" />
    ),
  },
];

function TaskBar() {
  return (
    <aside className="flex w-[103px] shrink-0 flex-col items-center bg-[linear-gradient(180deg,#d3dddb_0%,#cfe2e5_16%,#cfe0e3_32%,#e2d4d6_40%,#d3dde1_47%,#cfe0e5_53%,#dcdcdf_62%,#e6d8d9_72%,#d5dada_80%,#d0d9d9_100%)] text-[15px] leading-[22px] text-black">
      <button className="flex h-[38px] w-full items-center justify-center pr-px" aria-label="开始">
        <svg viewBox="0 0 20 20" className="h-5 w-5">
          <path d="M0 3l8.300-1.200v7.700H0zM9.300 1.600L20 0v9.500H9.300zM0 10.500h8.300v7.700L0 17zM9.300 10.500H20V20L9.300 18.400z" />
        </svg>
      </button>
      <button className="mb-[6px] flex h-[38px] w-full items-center justify-center pr-px" aria-label="搜索">
        <svg viewBox="0 0 20 20" className="h-5 w-5" fill="none" stroke="#000" strokeWidth="1.400">
          <circle cx="12.800" cy="7.200" r="6.500" />
          <path d="M8 12l-8 8" />
        </svg>
      </button>
      <nav className="flex w-full flex-col gap-px">
        {apps.map((a) => (
          <button
            key={a.name}
            aria-label={a.name}
            className={`relative flex h-[38px] w-full items-center justify-center pr-px ${a.active ? "bg-[#e9f2f4]" : ""}`}
          >
            {a.active ? (
              <PandaLogo />
            ) : (
              <svg viewBox="0 0 20 20" className="h-5 w-5">
                {a.art}
              </svg>
            )}
            <span className={`absolute right-0 bg-[#0078d7] ${a.bar}`} />
          </button>
        ))}
      </nav>
      <div className="mt-auto">桌面</div>
      <button className="mt-[3px] h-4" aria-label="展开">
        <svg viewBox="0 0 12 8" className="h-2 w-3" fill="none" stroke="#5c62b4" strokeWidth="1.200">
          <path d="M1 .5L4.500 4 1 7.500M6.500.5L10 4 6.500 7.500" />
        </svg>
      </button>
      <div className="mt-[10px] flex gap-[10px] pr-px">
        <svg viewBox="0 0 20 20" className="h-5 w-5">
          <circle cx="10" cy="10" r="10" fill="#0c8df0" />
          <path d="M7 6H4v9h3v-3l3-2M13 6h3v9h-3v-3l-3-2" fill="none" stroke="#fff" strokeWidth="1.500" />
          <path d="M11 3L7 10h3l-1 4 4-6h-3z" fill="#ffa51f" />
        </svg>
        <svg viewBox="0 0 20 20" className="h-5 w-5">
          <circle cx="10" cy="10" r="10" fill="#ffe02e" />
          <path d="M1.500 5a10 10 0 0117 1c-5-2-9-3-13 .5zM18.500 15a10 10 0 01-17-1c5 2 9 3 13-.5z" fill="#18a046" />
          <path d="M10 6v8M6 10h8" stroke="#18a046" strokeWidth="1.800" />
        </svg>
        <svg viewBox="0 0 20 20" className="h-5 w-5" fill="none" stroke="#000" strokeWidth="1.200">
          <path d="M1 7v6h3l4 3.500v-13L4 7zM11.500 6.500l7 7M18.500 6.500l-7 7" />
        </svg>
      </div>
      <div className="mt-[14px] text-lg leading-6 font-bold text-white [-webkit-text-stroke:1px_#333]">英</div>
      <time className="mt-[25px] flex flex-col items-center">
        <span>16:40</span>
        <span>星期五</span>
        <span>2024/8/9</span>
      </time>
      <button className="mt-6 mb-5" aria-label="通知">
        <svg viewBox="0 0 20 20" className="h-5 w-5">
          <path d="M0 0h20v17h-7l-3 3-3-3H0z" />
          <path d="M4 5h12M4 9h12M4 13h8" stroke="#d0d9d9" strokeWidth="1.200" />
        </svg>
      </button>
      <div className="h-[6px] w-full border-t border-[#a3abac]" />
    </aside>
  );
}

export default function App() {
  return (
    <div className="flex h-screen overflow-hidden font-['Noto_Sans_CJK_SC',sans-serif]">
      <main className="flex min-w-0 flex-1 flex-col bg-[#3d4453] text-white">
        <TitleBar />
        <Toolbar />
        <div className="flex h-[27px] shrink-0">
          <div className="flex w-[184px] items-center border border-b-0 border-[#8a8a8a] bg-black pl-1 text-sm leading-5">
            <span className="text-xs leading-5">[对比]</span>
            嵌套块0 - 放大10...
            <button className="ml-auto mr-2" aria-label="关闭标签">
              <Cross />
            </button>
          </div>
        </div>
        <div className="flex min-h-0 flex-1">
          <Pane id="left" file="D:/嵌套块0 - 放大10倍.dwg" checked coords="X : 350554 ,  Y : -854571">
            <FloorPlan />
          </Pane>
          <Pane id="right" file="D:/嵌套块0.dwg" checked={false} coords="X : -286651 ,  Y : -877592" className="border-l border-[#c8c8c8]">
            <MiniPlan />
          </Pane>
        </div>
      </main>
      <TaskBar />
    </div>
  );
}
